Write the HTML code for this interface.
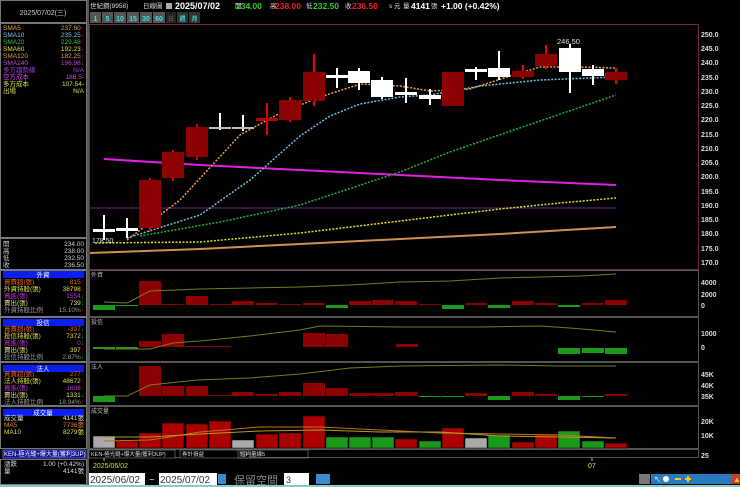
<!DOCTYPE html>
<html><head><meta charset="utf-8"><style>
html,body{margin:0;padding:0;background:#000;width:740px;height:487px;overflow:hidden}
svg{display:block}
text{font-family:"Liberation Sans","Noto Sans CJK TC",sans-serif}
</style></head><body>
<svg width="740" height="487" viewBox="0 0 740 487" xmlns="http://www.w3.org/2000/svg">
<rect width="740" height="487" fill="#000"/>
<!-- left panel frames -->
<g fill="none" stroke="#777" stroke-width="1">
<rect x="0.5" y="0.5" width="86" height="22"/>
<rect x="0.5" y="23.5" width="86" height="214"/>
<rect x="0.5" y="238.5" width="86" height="31"/>
<rect x="0.5" y="270.5" width="86" height="46"/>
<rect x="0.5" y="317.5" width="86" height="44"/>
<rect x="0.5" y="362.5" width="86" height="43"/>
<rect x="0.5" y="406.5" width="86" height="42"/>
<rect x="0.5" y="459.5" width="86" height="25"/>
</g>
<rect x="87" y="0" width="2" height="487" fill="#555"/>
<text x="43" y="15" font-size="7" fill="#ccc" text-anchor="middle">2025/07/02(三)</text>
<g font-size="6.5">
<text x="3" y="30" fill="#e0a040">SMA5</text><text x="84" y="30" fill="#e0a040" text-anchor="end">237.60<tspan fill="#f00">↑</tspan></text>
<text x="3" y="37" fill="#80c0e0">SMA10</text><text x="84" y="37" fill="#80c0e0" text-anchor="end">235.25<tspan fill="#f00">↑</tspan></text>
<text x="3" y="44" fill="#40c040">SMA20</text><text x="84" y="44" fill="#40c040" text-anchor="end">229.48<tspan fill="#f00">↑</tspan></text>
<text x="3" y="51" fill="#e0e040">SMA60</text><text x="84" y="51" fill="#e0e040" text-anchor="end">192.23<tspan fill="#f00">↑</tspan></text>
<text x="3" y="58" fill="#d0a060">SMA120</text><text x="84" y="58" fill="#d0a060" text-anchor="end">182.25<tspan fill="#f00">↑</tspan></text>
<text x="3" y="65" fill="#d040d0">SMA240</text><text x="84" y="65" fill="#d040d0" text-anchor="end">196.96<tspan fill="#0c0">↓</tspan></text>
<text x="3" y="72" fill="#a040e0">多方趨勢線</text><text x="84" y="72" fill="#a040e0" text-anchor="end">N/A</text>
<text x="3" y="79" fill="#e040e0">空方成本</text><text x="84" y="79" fill="#e040e0" text-anchor="end">188.5-</text>
<text x="3" y="86" fill="#e0e040">多方成本</text><text x="84" y="86" fill="#e0e040" text-anchor="end">107.54-</text>
<text x="3" y="93" fill="#e0e040">出場</text><text x="84" y="93" fill="#e0e040" text-anchor="end">N/A</text>

<text x="3" y="246" fill="#ccc">開</text><text x="84" y="246" fill="#ccc" text-anchor="end">234.00</text>
<text x="3" y="253" fill="#ccc">高</text><text x="84" y="253" fill="#ccc" text-anchor="end">238.00</text>
<text x="3" y="260" fill="#ccc">低</text><text x="84" y="260" fill="#ccc" text-anchor="end">232.50</text>
<text x="3" y="267" fill="#ccc">收</text><text x="84" y="267" fill="#ccc" text-anchor="end">236.50</text>
</g>
<!-- blue headers -->
<g fill="#0a1ef0">
<rect x="3" y="271" width="81" height="7"/><rect x="3" y="319" width="81" height="7"/>
<rect x="3" y="365" width="81" height="7"/><rect x="3" y="409" width="81" height="7"/>
<rect x="3" y="450" width="83" height="8" fill="#10109a" stroke="#88f" stroke-width="0.6"/>
</g>
<g font-size="6.5">
<text x="43" y="277" fill="#fff" text-anchor="middle">外資</text>
<text x="43" y="325" fill="#fff" text-anchor="middle">投信</text>
<text x="43" y="371" fill="#fff" text-anchor="middle">法人</text>
<text x="43" y="415" fill="#fff" text-anchor="middle">成交量</text>
<text x="4" y="456" fill="#fff" font-size="6">KEN-極光縫+爆大量(獲利3UP)</text>

<text x="4" y="284" fill="#f06020">買賣超(張)</text><text x="84" y="284" fill="#f06020" text-anchor="end">815<tspan fill="#f00">↑</tspan></text>
<text x="4" y="291" fill="#e0e040">外資持股(張)</text><text x="84" y="291" fill="#e0e040" text-anchor="end">38798<tspan fill="#f00">↑</tspan></text>
<text x="4" y="298" fill="#c030e0">買進(張)</text><text x="84" y="298" fill="#c030e0" text-anchor="end">1554<tspan fill="#0c0">↓</tspan></text>
<text x="4" y="305" fill="#e0e080">賣出(張)</text><text x="84" y="305" fill="#e0e080" text-anchor="end">739<tspan fill="#0c0">↓</tspan></text>
<text x="4" y="312" fill="#999">外資持股比例</text><text x="84" y="312" fill="#999" text-anchor="end">15.10%<tspan fill="#f00">↑</tspan></text>

<text x="4" y="331" fill="#f06020">買賣超(張)</text><text x="84" y="331" fill="#f06020" text-anchor="end">-397<tspan fill="#0c0">↓</tspan></text>
<text x="4" y="338" fill="#e0e040">投信持股(張)</text><text x="84" y="338" fill="#e0e040" text-anchor="end">7372<tspan fill="#0c0">↓</tspan></text>
<text x="4" y="345" fill="#c030e0">買進(張)</text><text x="84" y="345" fill="#c030e0" text-anchor="end">0<tspan fill="#0c0">↓</tspan></text>
<text x="4" y="352" fill="#e0e080">賣出(張)</text><text x="84" y="352" fill="#e0e080" text-anchor="end">397<tspan fill="#f00">↑</tspan></text>
<text x="4" y="359" fill="#999">投信持股比例</text><text x="84" y="359" fill="#999" text-anchor="end">2.87%<tspan fill="#0c0">↓</tspan></text>

<text x="4" y="376" fill="#f06020">買賣超(張)</text><text x="84" y="376" fill="#f06020" text-anchor="end">277<tspan fill="#f00">↑</tspan></text>
<text x="4" y="383" fill="#e0e040">法人持股(張)</text><text x="84" y="383" fill="#e0e040" text-anchor="end">48672<tspan fill="#f00">↑</tspan></text>
<text x="4" y="390" fill="#c030e0">買進(張)</text><text x="84" y="390" fill="#c030e0" text-anchor="end">1608<tspan fill="#f00">↑</tspan></text>
<text x="4" y="397" fill="#e0e080">賣出(張)</text><text x="84" y="397" fill="#e0e080" text-anchor="end">1331<tspan fill="#0c0">↓</tspan></text>
<text x="4" y="404" fill="#999">法人持股比例</text><text x="84" y="404" fill="#999" text-anchor="end">18.94%<tspan fill="#f00">↑</tspan></text>

<text x="4" y="420" fill="#ddd">成交量</text><text x="84" y="420" fill="#ddd" text-anchor="end">4141張</text>
<text x="4" y="427" fill="#e08030">MA5</text><text x="84" y="427" fill="#e08030" text-anchor="end">7736張</text>
<text x="4" y="434" fill="#e0e040">MA10</text><text x="84" y="434" fill="#e0e040" text-anchor="end">8279張</text>

<text x="4" y="466" fill="#ddd">漲跌</text><text x="84" y="466" fill="#ddd" text-anchor="end">1.00 (+0.42%)</text>
<text x="4" y="473" fill="#ddd">量</text><text x="84" y="473" fill="#ddd" text-anchor="end">4141張</text>
</g>

<!-- top title -->
<g font-size="7.5" fill="#ddd">
<text x="90" y="8" font-size="6.5">世紀鋼(9958)</text>
<text x="143" y="8" font-size="6.5">日線圖</text>
<rect x="166" y="3" width="6" height="6" fill="#aaa"/>
<text x="175" y="9" font-weight="bold" font-size="9" fill="#fff">2025/07/02</text>
<text x="235" y="8" font-size="6.5">開</text><text x="236" y="9" font-weight="bold" font-size="8.5" fill="#3c3"> 234.00</text>
<text x="270" y="8" font-size="6.5">高</text><text x="275" y="9" font-weight="bold" font-size="8.5" fill="#e22">238.00</text>
<text x="306" y="8" font-size="6.5">低</text><text x="313" y="9" font-weight="bold" font-size="8.5" fill="#3c3">232.50</text>
<text x="345" y="8" font-size="6.5">收</text><text x="352" y="9" font-weight="bold" font-size="8.5" fill="#e22">236.50</text>
<text x="389" y="8" font-size="6.5">s 元</text>
<text x="403" y="8" font-size="6.5">量</text><text x="411" y="9" font-weight="bold" font-size="8.5" fill="#fff">4141</text>
<text x="431" y="8" font-size="6.5">張</text>
<text x="441" y="9" font-weight="bold" font-size="8.5" fill="#fff">+1.00 (+0.42%)</text>
</g>
<!-- buttons -->
<g font-size="7" font-weight="bold" text-anchor="middle">
<rect x="90" y="12" width="11" height="11" fill="#555"/><text x="95.5" y="21" fill="#4dd">1</text>
<rect x="102" y="12" width="11" height="11" fill="#555"/><text x="107.5" y="21" fill="#4dd">5</text>
<rect x="114" y="12" width="12" height="11" fill="#555"/><text x="120" y="21" fill="#4dd">10</text>
<rect x="127" y="12" width="12" height="11" fill="#555"/><text x="133" y="21" fill="#4dd">15</text>
<rect x="140" y="12" width="12" height="11" fill="#555"/><text x="146" y="21" fill="#4dd">30</text>
<rect x="153" y="12" width="12" height="11" fill="#555"/><text x="159" y="21" fill="#4dd">60</text>
<rect x="166" y="12" width="10" height="11" fill="#222"/><text x="171" y="21" fill="#555" font-size="6">日</text>
<rect x="177" y="12" width="11" height="11" fill="#333"/><text x="182.5" y="21" fill="#4dd" font-size="6">週</text>
<rect x="189" y="12" width="11" height="11" fill="#333"/><text x="194.5" y="21" fill="#4dd" font-size="6">月</text>
</g>

<!-- frames -->
<rect x="89.5" y="24.5" width="609" height="245" fill="none" stroke="#6a2a4a"/>
<g fill="none" stroke="#555">
<rect x="89.5" y="270.5" width="609" height="46"/>
<rect x="89.5" y="317.5" width="609" height="44"/>
<rect x="89.5" y="362.5" width="609" height="43"/>
<rect x="89.5" y="406.5" width="609" height="42"/>
<rect x="89.5" y="449.5" width="609" height="8"/>
</g>
<!-- price axis -->
<g font-size="7" fill="#ddd" font-weight="bold">
<text x="701" y="37">250.0</text><text x="701" y="51">245.0</text><text x="701" y="65">240.0</text>
<text x="701" y="80">235.0</text><text x="701" y="94">230.0</text><text x="701" y="108">225.0</text>
<text x="701" y="122">220.0</text><text x="701" y="137">215.0</text><text x="701" y="151">210.0</text>
<text x="701" y="165">205.0</text><text x="701" y="179">200.0</text><text x="701" y="194">195.0</text>
<text x="701" y="208">190.0</text><text x="701" y="222">185.0</text><text x="701" y="236">180.0</text>
<text x="701" y="251">175.0</text><text x="701" y="265">170.0</text>
<text x="701" y="285">4000</text><text x="701" y="297">2000</text><text x="701" y="308">0</text>
<text x="701" y="336">1000</text><text x="701" y="350">0</text>
<text x="701" y="377">45K</text><text x="701" y="388">40K</text><text x="701" y="399">35K</text>
<text x="701" y="424">20K</text><text x="701" y="438">10K</text>
<text x="701" y="458">25</text>
</g>

<!-- horizontal purple lines -->
<line x1="90" y1="208" x2="616" y2="208" stroke="#6a2a8a" stroke-width="1"/>
<!-- MA lines -->
<polyline points="90,253 200,249 300,244 400,239 500,234 616,227" fill="none" stroke="#d09050" stroke-width="2"/>
<polyline points="104,159 200,165 300,170 400,175 500,180 616,185" fill="none" stroke="#e020e0" stroke-width="2"/>
<polyline points="95,243 200,242 300,233 400,221 500,209 560,203 616,198" fill="none" stroke="#e0e020" stroke-width="1.5" stroke-dasharray="2,1.5"/>
<polyline points="140,236 220,222 300,205 400,172 450,152 540,121 616,95" fill="none" stroke="#20b040" stroke-width="1.5" stroke-dasharray="2,1.5"/>
<polyline points="127,238 200,215 250,180 300,136 330,116 360,104 400,97 430,95 480,86 540,80 616,77" fill="none" stroke="#70c0e0" stroke-width="1.5" stroke-dasharray="2,1.5"/>
<polyline points="127,240 180,200 240,135 280,113 320,97 360,84 400,86 430,91 470,89 510,76 540,67 580,67 616,68" fill="none" stroke="#f0a040" stroke-width="1.5" stroke-dasharray="2,1.5"/>

<!-- candles -->
<g stroke-width="2">
<line x1="104" y1="215" x2="104" y2="240" stroke="#fff"/><rect x="93" y="229" width="22" height="3" fill="#fff"/>
<line x1="127" y1="218" x2="127" y2="238" stroke="#fff"/><rect x="116" y="228" width="22" height="3" fill="#fff"/>
<line x1="150" y1="178" x2="150" y2="232" stroke="#e00"/><rect x="139" y="180" width="22" height="48" fill="#8b0000"/>
<line x1="173" y1="150" x2="173" y2="181" stroke="#e00"/><rect x="162" y="152" width="22" height="26" fill="#8b0000"/>
<line x1="197" y1="124" x2="197" y2="160" stroke="#e00"/><rect x="186" y="127" width="22" height="30" fill="#8b0000"/>
<line x1="220" y1="113" x2="220" y2="130" stroke="#fff"/><rect x="209" y="127" width="22" height="2" fill="#bbb"/>
<line x1="243" y1="115" x2="243" y2="131" stroke="#fff"/><rect x="232" y="127" width="22" height="2" fill="#bbb"/>
<line x1="267" y1="103" x2="267" y2="135" stroke="#e00"/><rect x="256" y="118" width="22" height="3" fill="#b00"/>
<line x1="290" y1="97" x2="290" y2="122" stroke="#e00"/><rect x="279" y="100" width="22" height="20" fill="#8b0000"/>
<line x1="314" y1="54" x2="314" y2="106" stroke="#e00"/><rect x="303" y="72" width="22" height="29" fill="#8b0000"/>
<line x1="337" y1="68" x2="337" y2="88" stroke="#fff"/><rect x="326" y="75" width="22" height="3" fill="#fff"/>
<line x1="359" y1="68" x2="359" y2="90" stroke="#fff"/><rect x="348" y="71" width="22" height="12" fill="#fff"/>
<line x1="382" y1="77" x2="382" y2="99" stroke="#fff"/><rect x="371" y="80" width="22" height="17" fill="#fff"/>
<line x1="406" y1="78" x2="406" y2="103" stroke="#fff"/><rect x="395" y="92" width="22" height="3" fill="#fff"/>
<line x1="430" y1="89" x2="430" y2="105" stroke="#fff"/><rect x="419" y="95" width="22" height="4" fill="#fff"/>
<rect x="442" y="72" width="22" height="34" fill="#8b0000"/>
<line x1="476" y1="67" x2="476" y2="80" stroke="#fff"/><rect x="465" y="69" width="22" height="3" fill="#fff"/>
<line x1="499" y1="51" x2="499" y2="80" stroke="#fff"/><rect x="488" y="68" width="22" height="9" fill="#fff"/>
<line x1="523" y1="65" x2="523" y2="79" stroke="#e00"/><rect x="512" y="71" width="22" height="6" fill="#8b0000"/>
<line x1="546" y1="45" x2="546" y2="69" stroke="#e00"/><rect x="535" y="54" width="22" height="12" fill="#8b0000"/>
<line x1="570" y1="44" x2="570" y2="93" stroke="#fff"/><rect x="559" y="48" width="22" height="24" fill="#fff"/>
<line x1="593" y1="65" x2="593" y2="85" stroke="#fff"/><rect x="582" y="69" width="22" height="7" fill="#fff"/>
<line x1="616" y1="68" x2="616" y2="84" stroke="#e00"/><rect x="605" y="72" width="22" height="8" fill="#8b0000"/>
</g>
<text x="557" y="44" font-size="7.5" fill="#ddd">246.50</text>
<text x="92" y="243" font-size="7" fill="#ddd">178.50</text>

<!-- panel1 外資 -->
<text x="91" y="277" font-size="6" fill="#bbb">外資</text>
<g>
<rect x="93" y="305" width="22" height="5" fill="#1a9a1a"/><rect x="116" y="305" width="22" height="1" fill="#1a9a1a"/>
<rect x="139" y="281" width="22" height="24" fill="#8b0000"/><rect x="162" y="304" width="22" height="1" fill="#8b0000"/>
<rect x="186" y="296" width="22" height="9" fill="#8b0000"/><rect x="209" y="304" width="22" height="1" fill="#8b0000"/>
<rect x="232" y="301" width="22" height="4" fill="#8b0000"/><rect x="256" y="303" width="22" height="2" fill="#8b0000"/>
<rect x="279" y="304" width="22" height="1" fill="#8b0000"/><rect x="303" y="303" width="22" height="2" fill="#8b0000"/>
<rect x="326" y="305" width="22" height="3" fill="#1a9a1a"/><rect x="349" y="301" width="22" height="4" fill="#8b0000"/>
<rect x="372" y="300" width="22" height="5" fill="#8b0000"/><rect x="395" y="301" width="22" height="4" fill="#8b0000"/>
<rect x="419" y="304" width="22" height="1" fill="#8b0000"/><rect x="442" y="305" width="22" height="4" fill="#1a9a1a"/>
<rect x="465" y="303" width="22" height="2" fill="#8b0000"/><rect x="488" y="305" width="22" height="3" fill="#1a9a1a"/>
<rect x="512" y="301" width="22" height="4" fill="#8b0000"/><rect x="535" y="303" width="22" height="2" fill="#8b0000"/>
<rect x="558" y="305" width="22" height="2" fill="#1a9a1a"/><rect x="582" y="303" width="22" height="2" fill="#8b0000"/>
<rect x="605" y="300" width="22" height="5" fill="#8b0000"/>
</g>
<polyline points="104,302 127,303 150,291 200,289 250,288 300,287 350,285 400,282 450,281 500,278 540,277 580,276 616,274" fill="none" stroke="#7a7a20" stroke-width="1"/>

<!-- panel2 投信 -->
<text x="91" y="324" font-size="6" fill="#bbb">投信</text>
<rect x="93" y="347" width="22" height="2" fill="#1a9a1a"/><rect x="116" y="347" width="22" height="2" fill="#1a9a1a"/>
<rect x="139" y="341" width="22" height="6" fill="#8b0000"/><rect x="162" y="334" width="22" height="13" fill="#8b0000"/>
<rect x="186" y="346" width="22" height="1" fill="#8b0000"/><rect x="209" y="346" width="22" height="1" fill="#8b0000"/>
<rect x="303" y="333" width="22" height="14" fill="#8b0000"/><rect x="326" y="334" width="22" height="13" fill="#8b0000"/>
<rect x="396" y="344" width="22" height="3" fill="#8b0000"/>
<rect x="558" y="348" width="22" height="6" fill="#1a9a1a"/><rect x="582" y="348" width="22" height="5" fill="#1a9a1a"/><rect x="605" y="348" width="22" height="6" fill="#1a9a1a"/>
<polyline points="104,349 150,349 173,343 200,341 250,336 300,330 320,326 400,327 480,327 540,326 570,328 616,332" fill="none" stroke="#7a7a20" stroke-width="1"/>

<!-- panel3 法人 -->
<text x="91" y="369" font-size="6" fill="#bbb">法人</text>
<rect x="93" y="396" width="22" height="6" fill="#1a9a1a"/>
<rect x="139" y="366" width="22" height="30" fill="#8b0000"/><rect x="162" y="386" width="22" height="10" fill="#8b0000"/>
<rect x="186" y="386" width="22" height="10" fill="#8b0000"/><rect x="209" y="395" width="22" height="1" fill="#8b0000"/>
<rect x="232" y="392" width="22" height="4" fill="#8b0000"/><rect x="256" y="394" width="22" height="2" fill="#8b0000"/>
<rect x="279" y="392" width="22" height="4" fill="#8b0000"/><rect x="303" y="383" width="22" height="13" fill="#8b0000"/>
<rect x="326" y="388" width="22" height="8" fill="#8b0000"/><rect x="349" y="393" width="22" height="3" fill="#8b0000"/>
<rect x="372" y="393" width="22" height="3" fill="#8b0000"/><rect x="395" y="392" width="22" height="4" fill="#8b0000"/>
<rect x="419" y="396" width="22" height="1" fill="#1a9a1a"/><rect x="442" y="396" width="22" height="1" fill="#1a9a1a"/>
<rect x="465" y="393" width="22" height="3" fill="#8b0000"/><rect x="488" y="396" width="22" height="4" fill="#1a9a1a"/>
<rect x="512" y="392" width="22" height="4" fill="#8b0000"/><rect x="535" y="394" width="22" height="2" fill="#8b0000"/>
<rect x="558" y="396" width="22" height="4" fill="#1a9a1a"/><rect x="582" y="396" width="22" height="1" fill="#1a9a1a"/>
<rect x="605" y="394" width="22" height="2" fill="#8b0000"/>
<polyline points="104,396 127,396 150,385 197,380 250,378 300,374 350,368 400,366 500,365 560,366 616,366" fill="none" stroke="#7a7a20" stroke-width="1"/>

<!-- panel4 volume -->
<text x="91" y="413" font-size="6" fill="#bbb">成交量</text>
<g stroke="#000" stroke-width="0.5">
<rect x="93" y="436" width="22" height="12" fill="#aaa"/><rect x="116" y="441" width="22" height="7" fill="#a00"/>
<rect x="139" y="433" width="22" height="15" fill="#a00"/><rect x="162" y="423" width="22" height="25" fill="#a00"/>
<rect x="186" y="424" width="22" height="24" fill="#a00"/><rect x="209" y="421" width="22" height="27" fill="#a00"/>
<rect x="232" y="440" width="22" height="8" fill="#aaa"/><rect x="256" y="434" width="22" height="14" fill="#a00"/>
<rect x="279" y="433" width="22" height="15" fill="#a00"/><rect x="303" y="416" width="22" height="32" fill="#a00"/>
<rect x="326" y="437" width="22" height="11" fill="#1a9a1a"/><rect x="349" y="437" width="22" height="11" fill="#1a9a1a"/>
<rect x="372" y="437" width="22" height="11" fill="#1a9a1a"/><rect x="395" y="439" width="22" height="9" fill="#a00"/>
<rect x="419" y="441" width="22" height="7" fill="#1a9a1a"/><rect x="442" y="428" width="22" height="20" fill="#a00"/>
<rect x="465" y="438" width="22" height="10" fill="#aaa"/><rect x="488" y="435" width="22" height="13" fill="#1a9a1a"/>
<rect x="512" y="442" width="22" height="6" fill="#a00"/><rect x="535" y="434" width="22" height="14" fill="#a00"/>
<rect x="558" y="431" width="22" height="17" fill="#1a9a1a"/><rect x="582" y="441" width="22" height="7" fill="#1a9a1a"/>
<rect x="605" y="443" width="22" height="5" fill="#a00"/>
</g>
<polyline points="104,441 150,440 200,432 260,427 320,427 380,430 440,433 500,434 560,435 616,438" fill="none" stroke="#c07020" stroke-width="1"/>
<polyline points="104,437 150,437 200,434 260,431 320,430 380,432 440,432 500,436 560,437 616,438" fill="none" stroke="#b0a020" stroke-width="1"/>

<!-- dropdown row -->
<rect x="89" y="450" width="86" height="8" fill="#000" stroke="#888" stroke-width="0.6"/>
<text x="91" y="456" font-size="5.5" fill="#ddd">KEN-極光縫+爆大量(獲利3UP)</text>
<rect x="180" y="450" width="70" height="8" fill="#000" stroke="#888" stroke-width="0.6"/>
<text x="182" y="456" font-size="5.5" fill="#ddd">券計損益</text><text x="245" y="456" font-size="5" fill="#ddd">▾</text>
<rect x="239" y="451" width="7" height="6" fill="#222"/>
<rect x="238" y="450" width="70" height="8" fill="none" stroke="#888" stroke-width="0.6"/>
<text x="240" y="456" font-size="5.5" fill="#ddd">短均量線5</text>
<text x="93" y="468" font-size="7" fill="#dd3">2025/06/02</text>
<line x1="104" y1="458" x2="104" y2="461" stroke="#aaa"/>
<text x="588" y="468" font-size="7" fill="#dd3">07</text>
<line x1="592" y1="458" x2="592" y2="461" stroke="#aaa"/>

<!-- bottom row -->
<rect x="89" y="473" width="56" height="12" fill="#fff"/>
<text x="90" y="483" font-size="10" fill="#333">2025/06/02</text>
<rect x="143" y="474" width="0" height="0"/>
<text x="149" y="483" font-size="10" fill="#ddd">~</text>
<rect x="159" y="473" width="58" height="12" fill="#fff"/>
<text x="160" y="483" font-size="10" fill="#333">2025/07/02</text>
<rect x="218" y="474" width="8" height="10" fill="#3a8ad0"/>
<text x="234" y="484" font-size="11" fill="#888">保留空間</text>
<rect x="284" y="473" width="25" height="12" fill="#fff"/><text x="286" y="483" font-size="9" fill="#333">3</text>
<rect x="316" y="474" width="14" height="10" fill="#3a8ad0"/>
<rect x="0" y="485" width="740" height="2" fill="#7dd0c8"/>
<!-- toolbar icons -->
<rect x="639" y="474" width="11" height="10" fill="#777"/>
<rect x="651" y="474" width="83" height="10" fill="#2a7ac0"/>
<rect x="731" y="474" width="9" height="10" fill="#c04020"/>
<text x="733" y="482" font-size="8" fill="#fc0">▲</text>
<text x="654" y="482" font-size="7" fill="#fff">↖</text>
<circle cx="666" cy="479" r="3" fill="#fff"/>
<rect x="675" y="478" width="6" height="2" fill="#fc0"/>
<rect x="685" y="478" width="6" height="2" fill="#fc0"/><rect x="687" y="476" width="2" height="6" fill="#fc0"/>
</svg>
</body></html>
